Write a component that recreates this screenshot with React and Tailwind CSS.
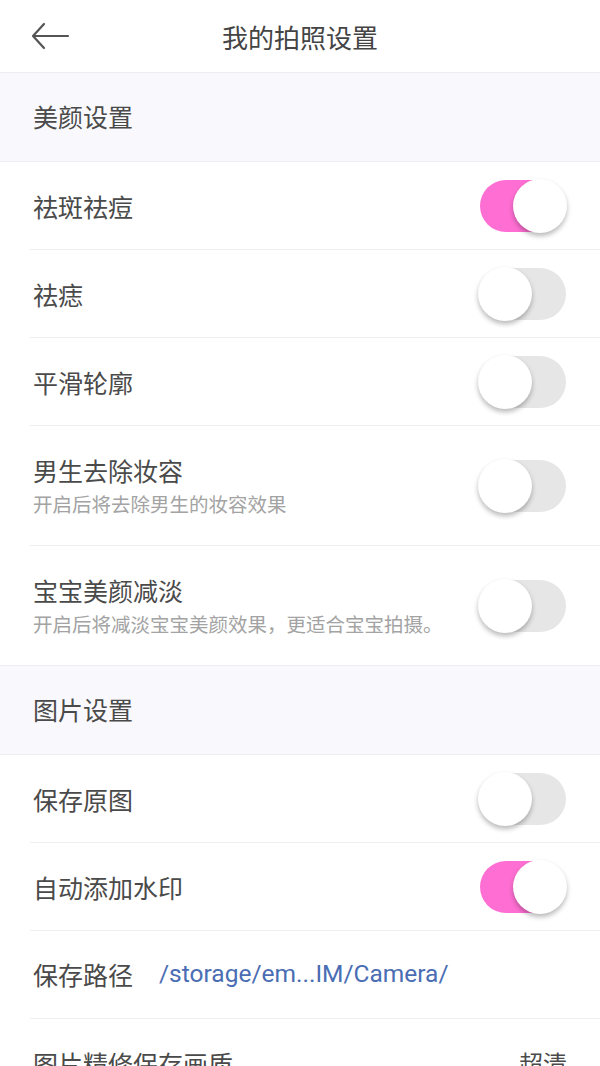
import React, { useState } from 'react';

const Toggle = ({ on, onChange }) => (
  <button
    type="button"
    onClick={onChange}
    className="relative w-[88px] h-[56px] shrink-0"
  >
    <span
      className={`absolute left-[2px] top-[2px] w-[86px] h-[52px] rounded-full ${
        on ? 'bg-[#ff6fd3]' : 'bg-[#e6e6e6]'
      }`}
    />
    <span
      className={`absolute top-[1px] w-[54px] h-[54px] rounded-full bg-white shadow-[0_3px_5px_rgba(0,0,0,0.28)] ${
        on ? 'left-[35px]' : 'left-0'
      }`}
    />
  </button>
);

const SectionHeader = ({ title }) => (
  <div className="h-[90px] bg-[#f9f9fd] border-y border-[#eeeef2] flex items-center pl-[33px] text-[25px] text-[#4a4a4a]">
    {title}
  </div>
);

const Row = ({ title, sub, right, last }) => (
  <div className={`ml-[30px] ${last ? '' : 'border-b border-[#efeff2]'}`}>
    <div className={`flex items-center justify-between pl-[3px] pr-[34px] ${sub ? 'h-[119px]' : 'h-[87px]'}`}>
      <div className="flex flex-col">
        <span className="text-[25px] leading-[32px] text-[#4a4a4a]">{title}</span>
        {sub && <span className="text-[19.5px] leading-[26px] mt-[5px] text-[#a3a3a3]">{sub}</span>}
      </div>
      {right}
    </div>
  </div>
);

export default function App() {
  const [s, setS] = useState({
    spot: true,
    mole: false,
    smooth: false,
    makeup: false,
    baby: false,
    raw: false,
    mark: true,
  });
  const flip = (k) => setS((p) => ({ ...p, [k]: !p[k] }));

  return (
    <div
      className="w-[600px] h-[1066px] overflow-hidden bg-white"
      style={{ fontFamily: '"Noto Sans CJK SC", Roboto, sans-serif' }}
    >
      <div className="relative h-[72px] flex items-center justify-center">
        <button type="button" className="absolute left-[30px] top-[22px]">
          <svg width="40" height="28" viewBox="0 0 40 28" fill="none" stroke="#555" strokeWidth="2.2" strokeLinecap="round" strokeLinejoin="round">
            <path d="M38 14H4" />
            <path d="M14 2L3 14l11 12" />
          </svg>
        </button>
        <h1 className="text-[26px] text-[#444]">我的拍照设置</h1>
      </div>

      <SectionHeader title="美颜设置" />
      <Row title="祛斑祛痘" right={<Toggle on={s.spot} onChange={() => flip('spot')} />} />
      <Row title="祛痣" right={<Toggle on={s.mole} onChange={() => flip('mole')} />} />
      <Row title="平滑轮廓" right={<Toggle on={s.smooth} onChange={() => flip('smooth')} />} />
      <Row
        title="男生去除妆容"
        sub="开启后将去除男生的妆容效果"
        right={<Toggle on={s.makeup} onChange={() => flip('makeup')} />}
      />
      <Row
        title="宝宝美颜减淡"
        sub="开启后将减淡宝宝美颜效果，更适合宝宝拍摄。"
        right={<Toggle on={s.baby} onChange={() => flip('baby')} />}
        last
      />

      <SectionHeader title="图片设置" />
      <Row title="保存原图" right={<Toggle on={s.raw} onChange={() => flip('raw')} />} />
      <Row title="自动添加水印" right={<Toggle on={s.mark} onChange={() => flip('mark')} />} />
      <div className="ml-[30px] border-b border-[#efeff2]">
        <div className="h-[87px] flex items-center pl-[3px] pr-[34px]">
          <span className="text-[25px] text-[#4a4a4a]">保存路径</span>
          <span
            className="ml-[26px] text-[24.5px] text-[#4a6db3]"
            style={{ fontFamily: 'Roboto, "Noto Sans CJK SC", sans-serif' }}
          >
            /storage/em...IM/Camera/
          </span>
        </div>
      </div>
      <Row title="图片精修保存画质" right={<span className="text-[24px] text-[#4a4a4a] mr-[-1px]">超清</span>} last />
    </div>
  );
}
